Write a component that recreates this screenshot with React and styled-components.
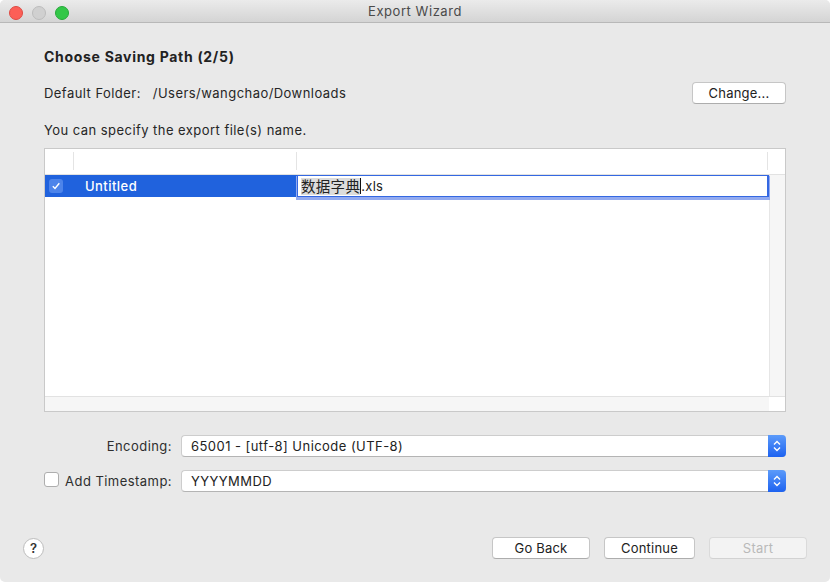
import React from 'react'
import styled, { createGlobalStyle } from 'styled-components'

const Global = createGlobalStyle`
  html, body {
    margin: 0;
    background: #ffffff;
  }
  body {
    font-family: Inter, "Noto Sans CJK SC", sans-serif;
    font-size: 13px;
    letter-spacing: 0.45px;
    color: #262626;
  }
`

const Window = styled.div`
  width: 830px;
  height: 582px;
  display: flex;
  flex-direction: column;
  background: #e9e9e9;
  border-radius: 5px;
  overflow: hidden;
  box-sizing: border-box;
`

const TitleBar = styled.div`
  position: relative;
  height: 22px;
  flex: none;
  display: flex;
  align-items: center;
  justify-content: center;
  background: linear-gradient(#ebebeb, #d4d4d4);
  border-bottom: 1px solid #b8b8b8;
`

const Lights = styled.div`
  position: absolute;
  left: 9px;
  top: 6px;
  display: flex;
  gap: 9px;
`

const Light = styled.span`
  width: 12px;
  height: 12px;
  border-radius: 50%;
  background: ${p => p.color};
  border: 0.5px solid ${p => p.edge};
`

const Title = styled.div`
  font-size: 13px;
  letter-spacing: 0.55px;
  color: #4a4a4a;
`

const Content = styled.div`
  display: flex;
  flex-direction: column;
  padding: 25px 44px 0 44px;
`

const Heading = styled.div`
  font-weight: 700;
  font-size: 14px;
  letter-spacing: 0.7px;
  line-height: 18px;
  color: #222;
`

const FolderRow = styled.div`
  margin-top: 16px;
  display: flex;
  align-items: center;
  justify-content: space-between;
  height: 22px;
`

const Path = styled.span`
  margin-left: 12px;
`

const Hint = styled.div`
  margin-top: 18px;
  line-height: 16px;
`

const Button = styled.button`
  height: 22px;
  width: ${p => p.w}px;
  padding: 0;
  font-family: Inter, sans-serif;
  font-size: 13px;
  letter-spacing: 0.2px;
  color: ${p => (p.disabled ? '#b9b9b9' : '#222')};
  background: ${p => (p.disabled ? '#f3f3f3' : '#ffffff')};
  border: 1px solid ${p => (p.disabled ? '#dadada' : '#c6c6c6')};
  border-bottom-color: ${p => (p.disabled ? '#d2d2d2' : '#adadad')};
  border-radius: 4px;
`

const Table = styled.div`
  margin-top: 10px;
  height: 264px;
  box-sizing: border-box;
  border: 1px solid #c9c9c9;
  background: #ffffff;
  display: flex;
  flex-direction: column;
`

const HeaderRow = styled.div`
  height: 25px;
  flex: none;
  display: grid;
  grid-template-columns: 29px 223px 471px 1fr;
  border-bottom: 1px solid #e2e2e2;
`

const HeaderCell = styled.div`
  margin: 3px 0 4px;
  border-right: ${p => (p.last ? 'none' : '1px solid #e4e4e4')};
`

const Body = styled.div`
  flex: 1;
  display: grid;
  grid-template-columns: 1fr 16px;
  grid-template-rows: 1fr 15px;
`

const Rows = styled.div`
  display: flex;
  flex-direction: column;
`

const Row = styled.div`
  height: 21px;
  display: grid;
  grid-template-columns: 29px 223px 1fr;
  align-items: stretch;
`

const Selected = styled.div`
  background: #2062dd;
  display: flex;
  align-items: center;
  color: #ffffff;
  font-weight: 500;
  padding-left: ${p => p.pad || 0}px;
`

const RowCheck = styled.span`
  margin-left: 4px;
  width: 14px;
  height: 14px;
  border-radius: 3px;
  background: #4d84ea;
  display: flex;
  align-items: center;
  justify-content: center;
`

const EditCell = styled.div`
  position: relative;
  height: 22px;
  box-sizing: border-box;
  background: #ffffff;
  border: 1px solid #3468e2;
  border-right-width: 2px;
  box-shadow: 0 2px 0 1px #92aaf0;
  display: flex;
  align-items: center;
  padding-left: 3px;
  font-size: 13px;
  letter-spacing: 0.3px;
  color: #222;
`

const Marked = styled.span`
  background: #dcdcdc;
  font-size: 14.5px;
  line-height: 17px;
  letter-spacing: 0.3px;
`

const Caret = styled.span`
  width: 1px;
  height: 16px;
  background: #111;
`

const VTrack = styled.div`
  background: #f6f6f6;
  border-left: 1px solid #e6e6e6;
`

const HTrack = styled.div`
  background: #f6f6f6;
  border-top: 1px solid #e2e2e2;
`

const Corner = styled.div`
  background: #ffffff;
  border-top: 1px solid #e2e2e2;
`

const Form = styled.div`
  margin-top: 23px;
  display: grid;
  grid-template-columns: 128px 1fr;
  column-gap: 9px;
  row-gap: 13px;
  align-items: center;
`

const Label = styled.label`
  display: flex;
  align-items: center;
  gap: 5px;
  justify-content: flex-end;
  color: #2e2e2e;
`

const Box = styled.span`
  margin-right: auto;
  margin-top: -3px;
  width: 15px;
  height: 15px;
  box-sizing: border-box;
  border: 1px solid #aeaeae;
  border-radius: 3px;
  background: #ffffff;
`

const Select = styled.div`
  height: 22px;
  box-sizing: border-box;
  display: flex;
  align-items: stretch;
  background: #ffffff;
  border: 1px solid #cdcdcd;
  border-bottom-color: #b4b4b4;
  border-right: none;
  border-radius: 4px;
`

const SelectText = styled.div`
  flex: 1;
  display: flex;
  align-items: center;
  padding-left: 9px;
  color: #222;
`

const Stepper = styled.div`
  width: 18px;
  margin: -1px 0;
  border-radius: 0 4px 4px 0;
  background: linear-gradient(#5c9bfa, #1d62f0);
  display: flex;
  align-items: center;
  justify-content: center;
`

const Footer = styled.div`
  margin-top: auto;
  padding: 0 23px 23px 23px;
  display: flex;
  align-items: center;
  gap: 14px;
`

const Help = styled.div`
  width: 21px;
  height: 21px;
  box-sizing: border-box;
  border-radius: 50%;
  background: #ffffff;
  border: 1px solid #bdbdbd;
  display: flex;
  align-items: center;
  justify-content: center;
  font-weight: 600;
  font-size: 13px;
  letter-spacing: 0;
  color: #333;
  margin-right: auto;
`

const Arrows = () => (
  <svg width="10" height="14" viewBox="0 0 10 14">
    <path d="M2 5.5 L5 2.5 L8 5.5 M2 8.5 L5 11.5 L8 8.5" fill="none" stroke="#fff" strokeWidth="1.4" />
  </svg>
)

const Dropdown = ({ children }) => (
  <Select>
    <SelectText>{children}</SelectText>
    <Stepper><Arrows /></Stepper>
  </Select>
)

const App = () => (
  <>
    <Global />
    <Window>
      <TitleBar>
        <Lights>
          <Light color="#fc5f57" edge="#de4a43" />
          <Light color="#d0d0d0" edge="#bcbcbc" />
          <Light color="#33c748" edge="#27a83a" />
        </Lights>
        <Title>Export Wizard</Title>
      </TitleBar>

      <Content>
        <Heading>Choose Saving Path (2/5)</Heading>
        <FolderRow>
          <div>
            Default Folder:<Path>/Users/wangchao/Downloads</Path>
          </div>
          <Button w={94}>Change...</Button>
        </FolderRow>
        <Hint>You can specify the export file(s) name.</Hint>

        <Table>
          <HeaderRow>
            <HeaderCell />
            <HeaderCell />
            <HeaderCell />
            <HeaderCell last />
          </HeaderRow>
          <Body>
            <Rows>
              <Row>
                <Selected>
                  <RowCheck>
                    <svg width="10" height="10" viewBox="0 0 10 10">
                      <path d="M1.8 5.2 L4 7.5 L8.3 2.3" fill="none" stroke="#fff" strokeWidth="1.4" />
                    </svg>
                  </RowCheck>
                </Selected>
                <Selected pad={11}>Untitled</Selected>
                <EditCell>
                  <Marked>数据字典</Marked>
                  <Caret />
                  .xls
                </EditCell>
              </Row>
            </Rows>
            <VTrack />
            <HTrack />
            <Corner />
          </Body>
        </Table>

        <Form>
          <Label>Encoding:</Label>
          <Dropdown>65001 - [utf-8] Unicode (UTF-8)</Dropdown>
          <Label>
            <Box />
            Add Timestamp:
          </Label>
          <Dropdown>YYYYMMDD</Dropdown>
        </Form>
      </Content>

      <Footer>
        <Help>?</Help>
        <Button w={98}>Go Back</Button>
        <Button w={91}>Continue</Button>
        <Button w={98} disabled>Start</Button>
      </Footer>
    </Window>
  </>
)

export default App
